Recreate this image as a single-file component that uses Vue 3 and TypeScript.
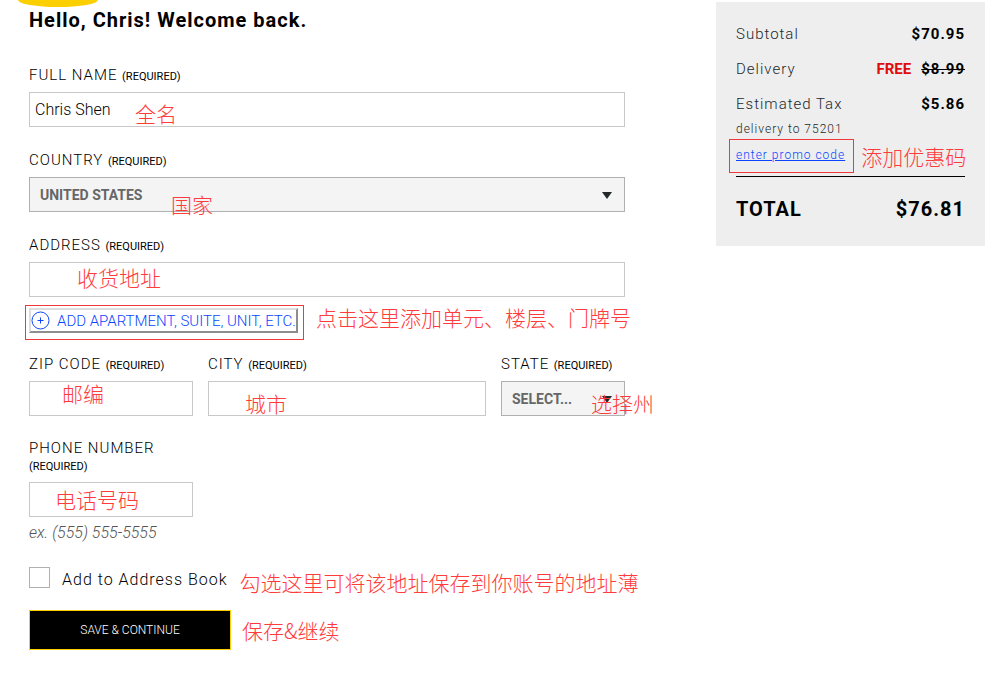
<script setup lang="ts">
import { ref } from 'vue'

const fullName = ref('Chris Shen')
const country = ref('UNITED STATES')
const address = ref('')
const zip = ref('')
const city = ref('')
const region = ref('SELECT...')
const phone = ref('')
const saveToBook = ref(false)
</script>

<template>
  <main class="page">
    <div class="blob" aria-hidden="true"></div>
    <form class="form" @submit.prevent>
      <h1>Hello, Chris! Welcome back.</h1>

      <div class="field">
        <label for="name">FULL NAME <small>(REQUIRED)</small></label>
        <input id="name" v-model="fullName" type="text" />
        <span class="note note-name">全名</span>
      </div>

      <div class="field">
        <label for="country">COUNTRY <small>(REQUIRED)</small></label>
        <div class="select">
          <select id="country" v-model="country">
            <option>UNITED STATES</option>
          </select>
        </div>
        <span class="note note-country">国家</span>
      </div>

      <div class="field">
        <label for="address">ADDRESS <small>(REQUIRED)</small></label>
        <input id="address" v-model="address" type="text" />
        <span class="note note-address">收货地址</span>
      </div>

      <div class="extra">
        <div class="marked">
          <button type="button" class="add">
            <svg width="20" height="20" viewBox="0 0 20 20" fill="none" stroke="currentColor">
              <circle cx="9.5" cy="9.5" r="8.5" />
              <path d="M6.5 9.5h6M9.5 6.5v6" />
            </svg>
            <span>ADD APARTMENT, SUITE, UNIT, ETC.</span>
          </button>
        </div>
        <span class="side-note">点击这里添加单元、楼层、门牌号</span>
      </div>

      <div class="triple">
        <div class="field">
          <label for="zip">ZIP CODE <small>(REQUIRED)</small></label>
          <input id="zip" v-model="zip" type="text" />
          <span class="note note-zip">邮编</span>
        </div>
        <div class="field">
          <label for="city">CITY <small>(REQUIRED)</small></label>
          <input id="city" v-model="city" type="text" />
          <span class="note note-city">城市</span>
        </div>
        <div class="field">
          <label for="state">STATE <small>(REQUIRED)</small></label>
          <div class="select">
            <select id="state" v-model="region">
              <option>SELECT...</option>
            </select>
          </div>
          <span class="note note-state">选择州</span>
        </div>
        <div class="field">
          <label for="phone">PHONE NUMBER <small>(REQUIRED)</small></label>
          <input id="phone" v-model="phone" type="tel" />
          <span class="note note-phone">电话号码</span>
        </div>
      </div>
      <p class="hint">ex. (555) 555-5555</p>

      <div class="book">
        <input id="book" v-model="saveToBook" type="checkbox" />
        <label for="book">Add to Address Book</label>
        <span class="side-note">勾选这里可将该地址保存到你账号的地址薄</span>
      </div>

      <div class="actions">
        <button type="submit" class="save">SAVE &amp; CONTINUE</button>
        <span class="side-note">保存&amp;继续</span>
      </div>
    </form>

    <aside class="summary">
      <dl>
        <div class="row"><dt>Subtotal</dt><dd>$70.95</dd></div>
        <div class="row"><dt>Delivery</dt><dd><span class="free">FREE</span><s>$8.99</s></dd></div>
        <div class="row"><dt>Estimated Tax</dt><dd>$5.86</dd></div>
      </dl>
      <p class="dest">delivery to 75201</p>
      <div class="promo">
        <a href="#">enter promo code</a>
        <span class="side-note">添加优惠码</span>
      </div>
      <div class="total"><span>TOTAL</span><span>$76.81</span></div>
    </aside>
  </main>
</template>

<style>
body {
  margin: 0;
  background: #fff;
}
</style>

<style scoped>
* {
  box-sizing: border-box;
}
.page {
  position: relative;
  display: grid;
  grid-template-columns: minmax(0, 596fr) minmax(0, 269fr);
  column-gap: 91px;
  align-items: start;
  padding: 2px 13px 24px 29px;
  font-family: Roboto, "Noto Sans CJK SC", sans-serif;
  font-weight: 300;
  font-size: 16px;
  color: #000;
}
.blob {
  position: absolute;
  left: 18px;
  top: 0;
  width: 80px;
  height: 7px;
  background: #fcd000;
  border-radius: 0 0 50% 50% / 0 0 100% 100%;
}
h1 {
  position: relative;
  margin: 6px 0 0;
  font-size: 20px;
  line-height: 24px;
  font-weight: 700;
  letter-spacing: 1px;
}
.field {
  position: relative;
}
.form > .field {
  margin-top: 25px;
}
.form > h1 + .field {
  margin-top: 35px;
}
label {
  letter-spacing: 1px;
}
.field label {
  display: block;
  margin-bottom: 8px;
  font-size: 15px;
  line-height: 17px;
}
small {
  font-size: 11px;
  line-height: 12px;
  font-weight: 400;
  letter-spacing: 0;
  white-space: nowrap;
}
.field input,
select {
  display: block;
  width: 100%;
  height: 35px;
  margin: 0;
  border: 1px solid #c8c8c8;
  border-radius: 0;
  background: #fff;
  color: #000;
  font: inherit;
}
.field input {
  padding: 0 5px;
}
.select {
  position: relative;
}
select {
  appearance: none;
  padding: 0 10px;
  background: #f4f4f4;
  border-color: #b0b0b0;
  color: #666;
  font-size: 14px;
  font-weight: 700;
}
.select::after {
  content: "";
  position: absolute;
  right: 13px;
  top: 15px;
  width: 10px;
  height: 7px;
  background: #22282a;
  clip-path: polygon(0 0, 100% 0, 50% 100%);
  pointer-events: none;
}
.note,
.side-note {
  color: #ff3b3b;
  font-family: "Noto Sans CJK SC", sans-serif;
  font-weight: 300;
  font-size: 21px;
  line-height: 24px;
  white-space: nowrap;
}
.note {
  position: absolute;
  pointer-events: none;
}
.note-name { left: 106px; bottom: 2px; }
.note-country { left: 142px; bottom: -4px; }
.note-address { left: 48px; bottom: 8px; }
.note-zip { left: 33px; bottom: 11px; }
.note-city { left: 37px; bottom: 1px; }
.note-state { left: 90px; bottom: 1px; }
.note-phone { left: 26px; bottom: 6px; }
.extra {
  display: flex;
  align-items: flex-start;
  gap: 12px;
  margin: 8px 0 16px -4px;
}
.marked {
  flex: none;
  height: 35px;
  padding: 2px 5px 0 3px;
  border: 1px solid #f03a3a;
}
.add {
  display: flex;
  align-items: center;
  gap: 6px;
  height: 25px;
  margin: 0;
  padding: 0;
  border: 2px solid;
  border-color: #dedede #8e8e8e #8e8e8e #dedede;
  background: #fff;
  color: #0a46ff;
  font: inherit;
  font-size: 15px;
}
.triple {
  display: grid;
  grid-template-columns: 164fr 278fr 124fr;
  gap: 24px 15px;
}
.hint {
  margin: 6px 0 0;
  font-size: 16px;
  line-height: 20px;
  font-style: italic;
  color: #555;
}
.book {
  display: flex;
  align-items: flex-start;
  gap: 12px;
  margin-top: 24px;
}
.book input {
  flex: none;
  appearance: none;
  width: 21px;
  height: 21px;
  margin: 0;
  border: 1px solid #b0b0b0;
  background: #fff;
}
.book input:checked {
  background: #000;
}
.book label {
  flex: none;
  padding-top: 3px;
  font-size: 16px;
  line-height: 20px;
}
.book .side-note {
  padding-top: 3px;
}
.actions {
  display: flex;
  align-items: center;
  gap: 11px;
  margin-top: 16px;
}
.save {
  width: 202px;
  height: 40px;
  border: 1px solid #fcd000;
  border-radius: 0;
  background: #000;
  color: #fff;
  font: inherit;
  font-size: 12px;
}
.summary {
  padding: 20px 20px 24px;
  background: #eee;
  color: #22282a;
}
dl,
dd {
  margin: 0;
}
dl {
  display: grid;
  gap: 11px;
}
.row {
  display: flex;
  justify-content: space-between;
  font-size: 15px;
  line-height: 24px;
}
dt {
  letter-spacing: 1px;
}
dd {
  display: flex;
  gap: 10px;
  font-weight: 700;
  letter-spacing: 1px;
  color: #000;
}
.free {
  letter-spacing: 0;
  color: #e00b0b;
}
.dest {
  margin: 5px 0 0;
  font-size: 12px;
  line-height: 16px;
  letter-spacing: 1px;
}
.promo {
  display: flex;
  align-items: center;
  gap: 7px;
  margin: 2px -7px 0;
  padding-bottom: 3px;
}
.promo a {
  height: 34px;
  padding: 0 8px 0 6px;
  border: 1px solid #f03a3a;
  color: #0a46ff;
  font-size: 12px;
  line-height: 30px;
  letter-spacing: 1px;
  white-space: nowrap;
}
.total {
  display: flex;
  justify-content: space-between;
  padding-top: 19px;
  border-top: 1px solid #000;
  color: #000;
  font-size: 20px;
  line-height: 26px;
  font-weight: 700;
  letter-spacing: 1px;
}
</style>
